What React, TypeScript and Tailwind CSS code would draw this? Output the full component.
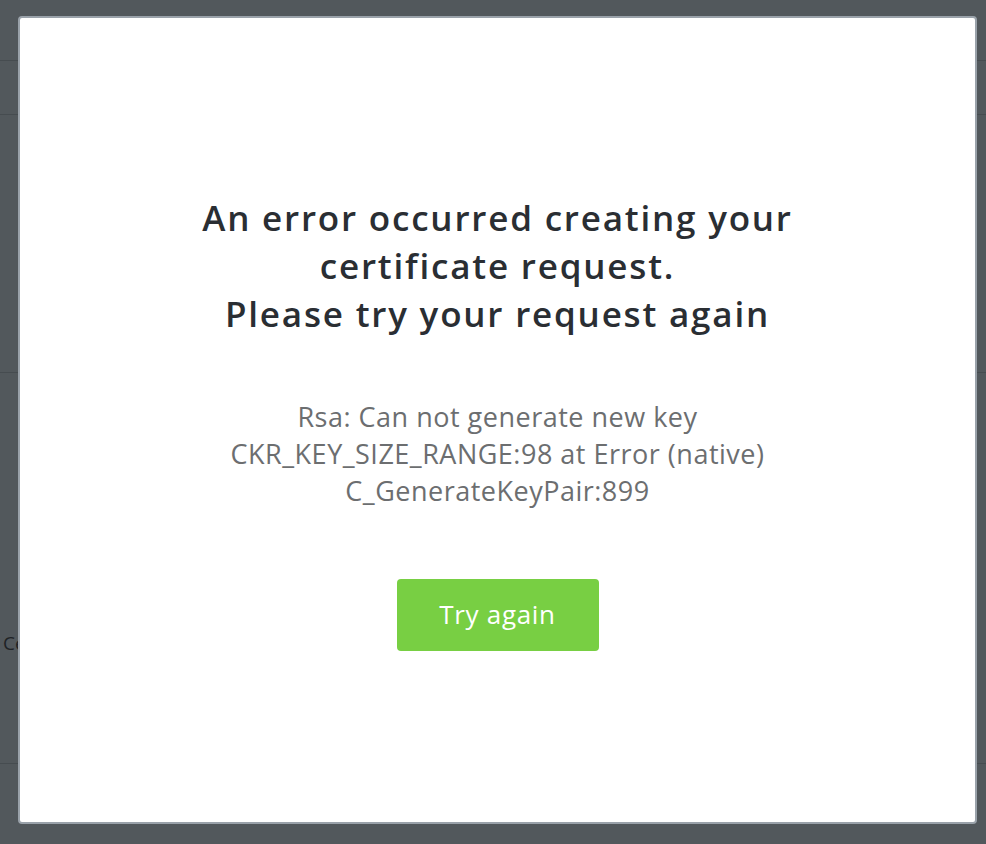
import React from "react";

function BackgroundPage() {
  return (
    <div className="flex flex-col h-full w-full bg-[#52585c] font-['Open_Sans',sans-serif]">
      <div className="h-[61px] border-b border-[#464c50]" />
      <div className="h-[54px] border-b border-[#464c50]" />
      <div className="h-[258px] border-b border-[#464c50]" />
      <div className="h-[391px] border-b border-[#464c50] flex flex-col justify-end pb-[110px]">
        <span className="pl-[3px] text-[19px] leading-none text-[#1f2326]">Certificate</span>
      </div>
      <div className="flex-1" />
    </div>
  );
}

export default function App() {
  return (
    <div className="relative h-[844px] w-full overflow-hidden">
      <BackgroundPage />

      {/* modal */}
      <div className="absolute inset-0 pl-[18px] pr-[9px] pt-[16px] pb-[20px]">
        <div className="h-full w-full rounded-[4px] border-2 border-[#9aa2aa] bg-white flex flex-col items-center justify-center pt-[4px] font-['Open_Sans',sans-serif]">
          <h1 className="text-center text-[35px] leading-[48px] font-semibold tracking-[1.8px] text-[#2a2e33]">
            An error occurred creating your
            <br />
            certificate request.
            <br />
            Please try your request again
          </h1>
          <p className="mt-[60px] text-center text-[27px] leading-[37px] tracking-[0.5px] text-[#6c6e70]">
            Rsa: Can not generate new key
            <br />
            CKR_KEY_SIZE_RANGE:98 at Error (native)
            <br />
            C_GenerateKeyPair:899
          </p>
          <button className="mt-[70px] w-[202px] h-[72px] rounded-[4px] bg-[#78cf43] text-white text-[26px] tracking-[0.7px]">
            Try again
          </button>
        </div>
      </div>
    </div>
  );
}
